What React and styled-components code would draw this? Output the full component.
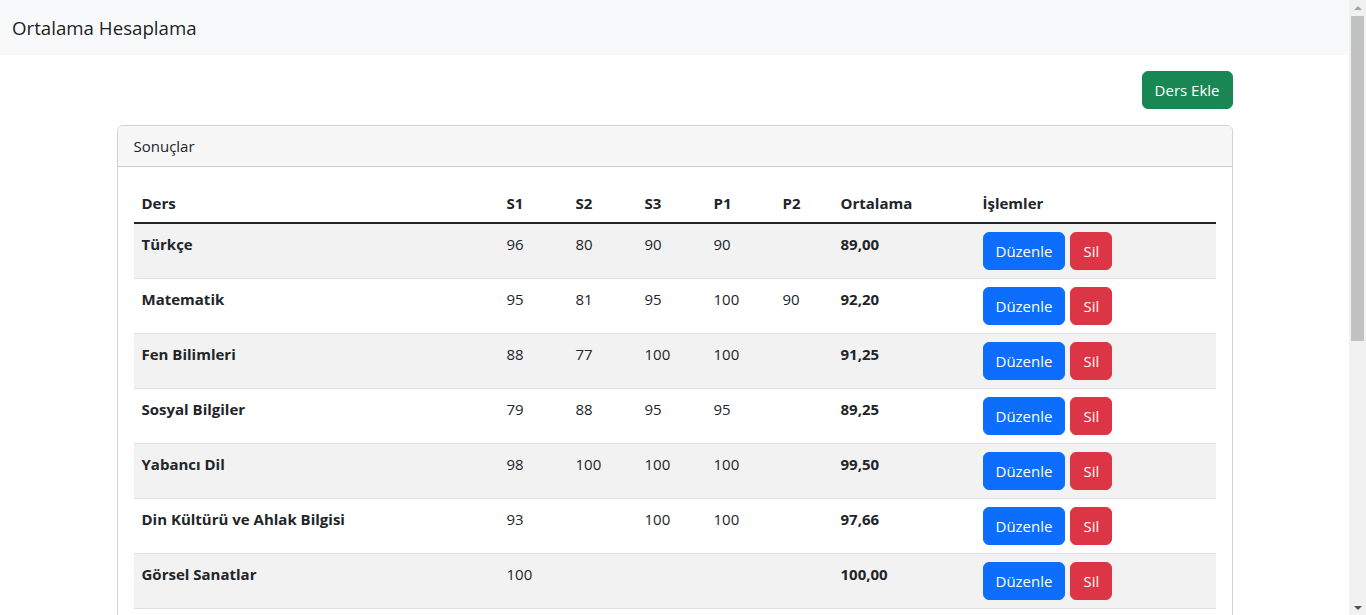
import React from "react";
import styled, { createGlobalStyle } from "styled-components";

const Global = createGlobalStyle`
  html, body { margin: 0; padding: 0; }
  body {
    font-family: "Open Sans", "Noto Sans", sans-serif;
    font-size: 15px;
    line-height: 24px;
    color: #212529;
    background: #fff;
    overflow: hidden;
  }
  * { box-sizing: border-box; }
`;

const Window = styled.div`
  display: flex;
  height: 100vh;
  overflow: hidden;
`;

const Page = styled.div`
  flex: 1;
  min-width: 0;
  overflow: hidden;
`;

const ScrollTrack = styled.div`
  width: 17px;
  flex: none;
  background: #f1f1f1;
  display: flex;
  flex-direction: column;
  align-items: center;
`;

const Arrow = styled.div`
  height: 15px;
  width: 17px;
  display: flex;
  align-items: center;
  justify-content: center;
  &::before {
    content: "";
    border-left: 4px solid transparent;
    border-right: 4px solid transparent;
    ${(p) => (p.$down ? "border-top: 4px solid #505050;" : "border-bottom: 4px solid #a3a3a3;")}
  }
`;

const Thumb = styled.div`
  width: 13px;
  height: 325px;
  margin-top: 1px;
  background: #c1c1c1;
`;

const Spacer = styled.div`
  flex: 1;
`;

const Navbar = styled.nav`
  background: #f8f9fa;
  height: 55px;
  display: flex;
  align-items: center;
  padding: 0 12px;
`;

const Brand = styled.span`
  font-size: 18.7px;
  line-height: 30px;
  color: rgba(0, 0, 0, 0.9);
`;

const Container = styled.main`
  max-width: 1140px;
  margin: 0 auto;
  padding: 16px 12px 16px;
`;

const Toolbar = styled.div`
  display: flex;
  justify-content: flex-end;
  margin-bottom: 16px;
`;

const Button = styled.button`
  font-family: inherit;
  font-size: 15px;
  line-height: 24px;
  padding: 6px 12px;
  border: 1px solid ${(p) => p.$bg};
  border-radius: 6px;
  background: ${(p) => p.$bg};
  color: #fff;
  cursor: pointer;
  & + & { margin-left: 5px; }
`;

const Card = styled.section`
  border: 1px solid rgba(0, 0, 0, 0.175);
  border-radius: 6px;
  overflow: hidden;
`;

const CardHeader = styled.div`
  padding: 8px 16px;
  background: #f7f7f7;
  border-bottom: 1px solid rgba(0, 0, 0, 0.175);
  line-height: 24px;
`;

const CardBody = styled.div`
  padding: 16px;
`;

const Table = styled.table`
  width: 100%;
  border-collapse: collapse;
  table-layout: fixed;
  margin-bottom: 16px;
`;

const Th = styled.th`
  text-align: left;
  font-weight: 700;
  padding: 8px 8px 7px;
  vertical-align: bottom;
  border-bottom: 2px solid #212529;
`;

const Row = styled.tr`
  background: ${(p) => (p.$odd ? "#f2f2f2" : "#fff")};
  border-bottom: 1px solid #dee2e6;
`;

const Td = styled.td`
  padding: 8px;
  vertical-align: top;
  font-weight: ${(p) => (p.$bold ? 700 : 400)};
  white-space: nowrap;
`;

const widths = [365, 69, 69, 69, 69, 58, 142, 241];
const headers = ["Ders", "S1", "S2", "S3", "P1", "P2", "Ortalama", "İşlemler"];

const rows = [
  ["Türkçe", "96", "80", "90", "90", "", "89,00"],
  ["Matematik", "95", "81", "95", "100", "90", "92,20"],
  ["Fen Bilimleri", "88", "77", "100", "100", "", "91,25"],
  ["Sosyal Bilgiler", "79", "88", "95", "95", "", "89,25"],
  ["Yabancı Dil", "98", "100", "100", "100", "", "99,50"],
  ["Din Kültürü ve Ahlak Bilgisi", "93", "", "100", "100", "", "97,66"],
  ["Görsel Sanatlar", "100", "", "", "", "", "100,00"],
  ["Müzik", "100", "", "", "", "", "100,00"],
  ["Beden Eğitimi", "100", "", "", "", "", "100,00"],
  ["Teknoloji ve Tasarım", "95", "", "", "", "", "95,00"],
  ["Bilişim Teknolojileri", "90", "100", "", "", "", "95,00"],
  ["Rehberlik", "100", "", "", "", "", "100,00"],
];

export default function App() {
  return (
    <Window>
      <Global />
      <Page>
        <Navbar>
          <Brand>Ortalama Hesaplama</Brand>
        </Navbar>
        <Container>
          <Toolbar>
            <Button $bg="#198754">Ders Ekle</Button>
          </Toolbar>
          <Card>
            <CardHeader>Sonuçlar</CardHeader>
            <CardBody>
              <Table>
                <colgroup>
                  {widths.map((w, i) => (
                    <col key={i} style={{ width: w }} />
                  ))}
                </colgroup>
                <thead>
                  <tr>
                    {headers.map((h) => (
                      <Th key={h}>{h}</Th>
                    ))}
                  </tr>
                </thead>
                <tbody>
                  {rows.map((r, i) => (
                    <Row key={r[0]} $odd={i % 2 === 0}>
                      <Td $bold>{r[0]}</Td>
                      <Td>{r[1]}</Td>
                      <Td>{r[2]}</Td>
                      <Td>{r[3]}</Td>
                      <Td>{r[4]}</Td>
                      <Td>{r[5]}</Td>
                      <Td $bold>{r[6]}</Td>
                      <Td>
                        <Button $bg="#0d6efd">Düzenle</Button>
                        <Button $bg="#dc3545">Sil</Button>
                      </Td>
                    </Row>
                  ))}
                </tbody>
              </Table>
            </CardBody>
          </Card>
        </Container>
      </Page>
      <ScrollTrack>
        <Arrow />
        <Thumb />
        <Spacer />
        <Arrow $down />
      </ScrollTrack>
    </Window>
  );
}
